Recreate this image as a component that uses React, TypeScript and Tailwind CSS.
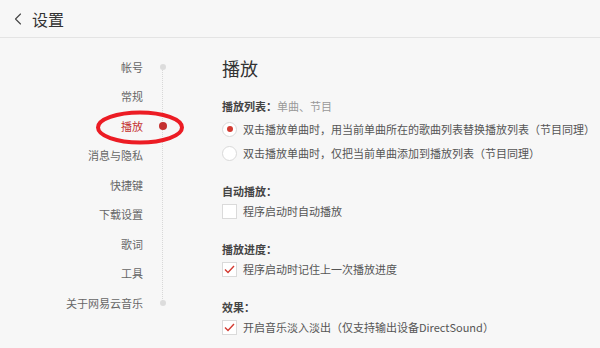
import { ChevronLeft } from "lucide-react";

const navItems = ["帐号", "常规", "播放", "消息与隐私", "快捷键", "下载设置", "歌词", "工具", "关于网易云音乐"];

function Radio({ checked }: { checked?: boolean }) {
  return (
    <span className="w-[15px] h-[15px] rounded-full border border-[#d9d9d9] bg-white flex items-center justify-center shrink-0">
      {checked && <span className="w-[6px] h-[6px] rounded-full bg-[#d33a31]" />}
    </span>
  );
}

function Check({ checked }: { checked?: boolean }) {
  return (
    <span className="w-[15px] h-[15px] border border-[#dadada] bg-white flex items-center justify-center shrink-0">
      {checked && (
        <svg width="11" height="9" viewBox="0 0 11 9" fill="none">
          <path d="M1 4.5 L4 7.5 L10 1" stroke="#d33a31" strokeWidth="1.4" />
        </svg>
      )}
    </span>
  );
}

function Label({ title, hint, className = "" }: { title: string; hint?: string; className?: string }) {
  return (
    <div className={`h-[20px] flex items-center text-[11px] ${className}`}>
      <span className="font-semibold text-[#444]">{title}</span>
      {hint && <span className="text-[#999]">{hint}</span>}
    </div>
  );
}

export default function App() {
  return (
    <div
      className="w-[600px] h-[348px] bg-[#f7f7f7] overflow-hidden text-[#555]"
      style={{ fontFamily: '"Noto Sans CJK SC", "Noto Sans", sans-serif' }}
    >
      {/* header */}
      <div className="h-[38px] border-b border-[#e4e4e4] flex items-center pl-[8px] gap-[4px]">
        <ChevronLeft size={20} strokeWidth={1.3} className="text-[#444]" />
        <span className="text-[16px] text-[#333] leading-none">设置</span>
      </div>

      <div className="flex">
        {/* side nav */}
        <div className="relative w-[183px] pt-[14px]">
          <div className="absolute left-[162px] top-[30px] h-[235px] border-l border-dotted border-[#d8d8d8]" />
          {navItems.map((item, i) => (
            <div key={item} className="h-[29.5px] flex items-center">
              <span className={`w-[143px] text-right text-[11px] ${i === 2 ? "text-[#c4302f]" : "text-[#666]"}`}>
                {item}
              </span>
              <span className="w-[40px] flex justify-center relative">
                {i === 0 || i === navItems.length - 1 ? (
                  <span className="w-[6px] h-[6px] rounded-full bg-[#dcdcdc]" />
                ) : i === 2 ? (
                  <span className="w-[8px] h-[8px] rounded-full bg-[#c4302f]" />
                ) : null}
              </span>
            </div>
          ))}
          {/* annotation */}
          <svg className="absolute left-[94px] top-[72px]" width="92" height="36" viewBox="0 0 92 36">
            <ellipse cx="46" cy="17.5" rx="42" ry="15" fill="none" stroke="#ec1c24" strokeWidth="4" />
          </svg>
        </div>

        {/* content */}
        <div className="ml-[39px] pt-[18px] flex flex-col">
          <div className="h-[24px] flex items-center text-[18px] text-[#333]">播放</div>

          <Label title="播放列表：" hint="单曲、节目" className="mt-[16px]" />
          <div className="mt-[1px] h-[24px] flex items-center gap-[6px] text-[11px]">
            <Radio checked />
            <span>双击播放单曲时，用当前单曲所在的歌曲列表替换播放列表（节目同理）</span>
          </div>
          <div className="h-[24px] flex items-center gap-[6px] text-[11px]">
            <Radio />
            <span>双击播放单曲时，仅把当前单曲添加到播放列表（节目同理）</span>
          </div>

          <Label title="自动播放：" className="mt-[16px]" />
          <div className="h-[20px] flex items-center gap-[6px] text-[11px]">
            <Check />
            <span>程序启动时自动播放</span>
          </div>

          <Label title="播放进度：" className="mt-[18px]" />
          <div className="h-[20px] flex items-center gap-[6px] text-[11px]">
            <Check checked />
            <span>程序启动时记住上一次播放进度</span>
          </div>

          <Label title="效果：" className="mt-[18px]" />
          <div className="h-[20px] flex items-center gap-[6px] text-[11px]">
            <Check checked />
            <span>开启音乐淡入淡出（仅支持输出设备DirectSound）</span>
          </div>
        </div>
      </div>
    </div>
  );
}
